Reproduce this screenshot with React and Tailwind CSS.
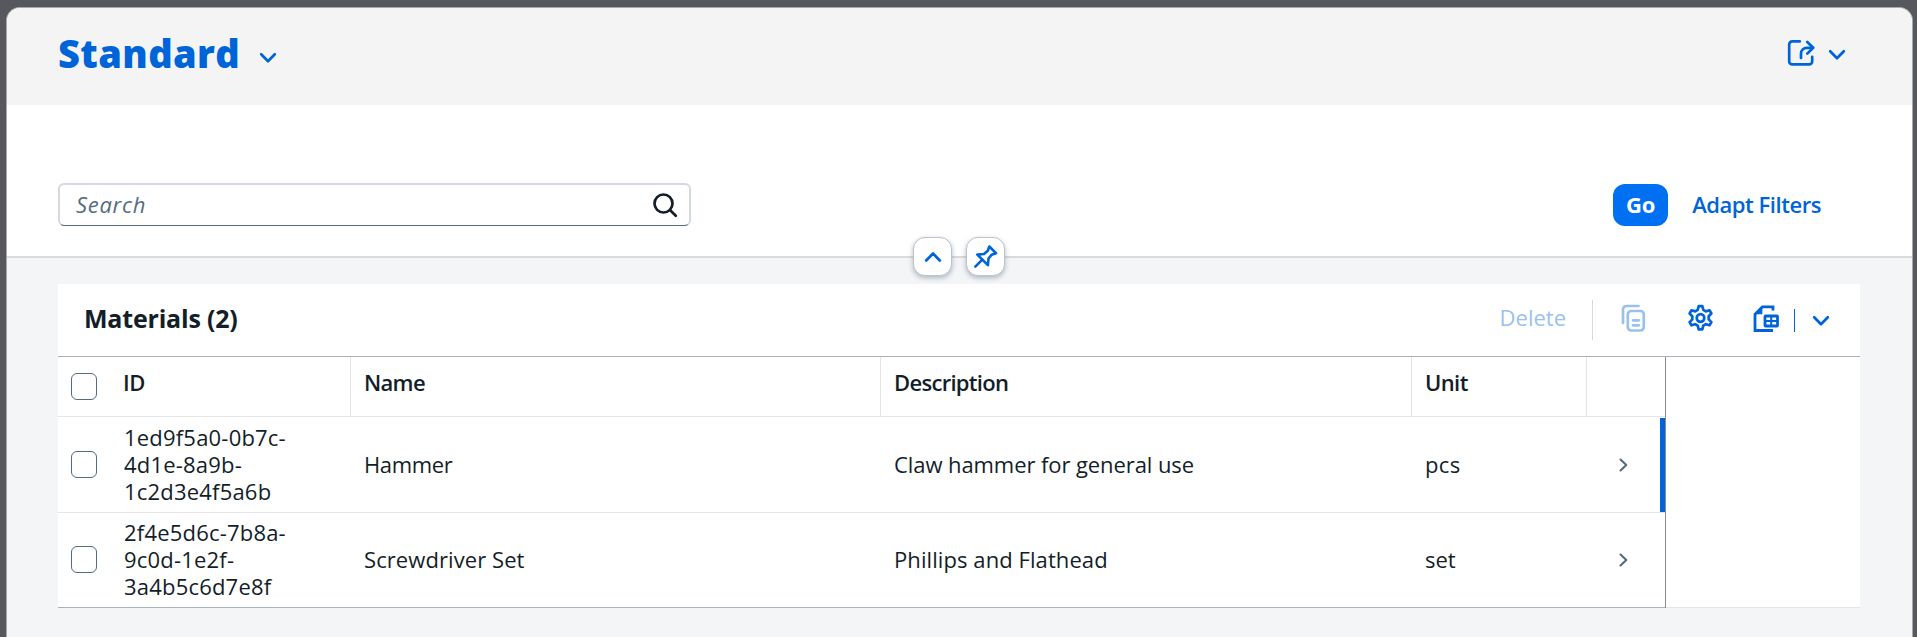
const rows = [
  {
    id: ["1ed9f5a0-0b7c-", "4d1e-8a9b-", "1c2d3e4f5a6b"],
    name: <span className="tracking-[-0.35px]">Hammer</span>,
    description: <span className="tracking-[-0.08px]">Claw hammer for general use</span>,
    unit: <span className="tracking-[0.4px]">pcs</span>,
    current: true,
  },
  {
    id: ["2f4e5d6c-7b8a-", "9c0d-1e2f-", "3a4b5c6d7e8f"],
    name: <span className="tracking-[0.08px]">Screwdriver Set</span>,
    description: <span className="tracking-[0.08px]">Phillips and Flathead</span>,
    unit: <span>set</span>,
    current: false,
  },
];

const GRID = "grid grid-cols-[293px_530px_531px_175px_78px]";

function Icon({ w, h, sw = 2.7, className = "", children }) {
  return (
    <svg
      width={w}
      height={h}
      viewBox={`0 0 ${w} ${h}`}
      fill="none"
      stroke="currentColor"
      strokeWidth={sw}
      strokeLinecap="round"
      strokeLinejoin="round"
      className={`shrink-0 ${className}`}
    >
      {children}
    </svg>
  );
}

const Chevron = ({ className }) => (
  <Icon w={18} h={12} className={className}>
    <path d="M2.2 2.2 9 9.2l6.8-7" />
  </Icon>
);

function Checkbox() {
  return <span className="block h-[27px] w-[26px] rounded-[6px] border border-[#556b82] bg-white" />;
}

function Header() {
  return (
    <header className="flex h-[97px] items-start bg-[#f4f4f4] pl-[51px] pr-[66px] text-[#0064d9]">
      <h1 className="mt-[19px] text-[38px] leading-[52px] font-extrabold tracking-[0.4px]">Standard</h1>
      <Chevron className="mt-[44px] ml-[19px]" />
      <div className="ml-auto flex">
        <Icon w={28} h={27} className="mt-[31px] mr-[13px]">
          <path d="M12.8 2.4H5.2a3 3 0 0 0-3 3v17a3 3 0 0 0 3 3h17a3 3 0 0 0 3-3v-4.6" />
          <path d="M14 19v-4.200C14 11 16.500 8.800 20 8.800h5.800" />
          <path d="M20.300 3 26.200 8.800l-5.900 5.800" />
        </Icon>
        <Chevron className="mt-[41px]" />
      </div>
    </header>
  );
}

function FilterBar() {
  return (
    <section className="relative flex h-[153px] items-start border-b-2 border-[#d9dadc] bg-white pt-[78px] pr-[91px] pl-[51px]">
      <div className="flex h-[43px] w-[633px] items-center justify-between rounded-[6px] border-2 border-b border-[#d5dae0] border-b-[#556b82] pr-[11px] pl-[16px]">
        <span className="-mt-[3px] text-[22px] leading-[30px] tracking-[0.7px] text-[#556b82] italic">Search</span>
        <Icon w={26} h={26} sw={2.7} className="-mt-px text-[#131e29]">
          <circle cx="11.500" cy="11.500" r="9" />
          <path d="m18.200 18.200 5.600 5.600" />
        </Icon>
      </div>
      <button className="mt-px ml-auto h-[42px] w-[55px] rounded-[12px] bg-[#0070f2] pb-[3px] text-[22px] leading-[30px] font-bold text-white">
        Go
      </button>
      <button className="ml-[24px] h-[42px] text-[22px] leading-[30px] font-semibold tracking-[-0.45px] text-[#0064d9]">
        Adapt Filters
      </button>
      <div className="absolute top-[132px] left-[906px] flex gap-[14px] text-[#0064d9]">
        <span className="flex size-[39px] items-center justify-center rounded-[12px] border border-[#bcc3ca] bg-white shadow-[0_2px_5px_rgba(85,107,130,0.45)]">
          <Icon w={18} h={12}>
            <path d="m2.200 9.500 6.800-7 6.800 7" />
          </Icon>
        </span>
        <span className="flex size-[39px] items-center justify-center rounded-[12px] border border-[#bcc3ca] bg-white shadow-[0_2px_5px_rgba(85,107,130,0.45)]">
          <Icon w={25} h={25} sw={2.6}>
            <path d="M16.300 2.500 23 9.200l-4.300 1.500-3.200 3.800-.6 6.700L4.300 10.600l6.700-.6 3.800-3.200z" />
            <path d="m9.300 15.700-7 7" />
          </Icon>
        </span>
      </div>
    </section>
  );
}

function Toolbar() {
  return (
    <div className="flex h-[72px] items-start pr-[30px] pl-[26px]">
      <h2 className="mt-[17px] text-[25px] leading-[34px] font-bold tracking-[-0.2px] text-[#131e29]">Materials (2)</h2>
      <div className="ml-auto flex text-[#0064d9]">
        <span className="mt-[18px] text-[22px] leading-[30px] font-medium text-[#99c1f0]">Delete</span>
        <span className="mt-[16px] ml-[26px] h-[40px] w-px bg-[#d9d9d9]" />
        <Icon w={25} h={28} sw={2.7} className="mt-[20px] ml-[28px] text-[#99c1f0]">
          <path d="M2 19V5.500a3.500 3.500 0 0 1 3.500-3.500h12" />
          <rect x="6.800" y="7" width="16" height="19.500" rx="3.500" />
          <path d="M12 16.300h5.800M12 21.300h5.800" />
        </Icon>
        <Icon w={27} h={28} className="mt-[20px] ml-[41px]">
          <path d="M11.700 2.200h3.600l1 3.700 2.500 1.500 3.700-1.100 1.900 3.200-2.700 2.700v3.200l2.700 2.700-1.900 3.200-3.700-1.100-2.500 1.500-1 3.700h-3.600l-1-3.700-2.500-1.500-3.700 1.100-1.900-3.200 2.700-2.700v-3.200L2.600 9.500l1.900-3.200 3.700 1.100 2.500-1.500z" />
          <circle cx="13.500" cy="14" r="3.800" />
        </Icon>
        <Icon w={26} h={28} sw={2.800} className="mt-[21px] ml-[39px]">
          <path d="M20 5.500V1.900H9.300L2 9.300v16.200h18" strokeLinecap="butt" strokeLinejoin="miter" />
          <path d="M2 9.300h7.300V2z" fill="currentColor" stroke="none" />
          <rect x="12" y="11" width="12.500" height="10" rx="0.600" />
          <path d="M18.200 11v10M12 16h12.500" strokeWidth="2" />
        </Icon>
        <span className="mt-[25px] ml-[15px] h-[23px] w-px bg-[#0064d9]" />
        <Chevron className="mt-[31px] ml-[17px]" />
      </div>
    </div>
  );
}

function TableHead() {
  return (
    <div className={`${GRID} h-[60px] border-b border-[#e5e5e5] text-[22px] leading-[30px] font-semibold text-[#131e29]`}>
      <div className="flex border-r border-[#e5e5e5] pl-[13px]">
        <span className="mt-[16px]">
          <Checkbox />
        </span>
        <span className="mt-[10px] ml-[26px] tracking-[-0.5px]">ID</span>
      </div>
      <div className="border-r border-[#e5e5e5] pt-[10px] pl-[13px] tracking-[-0.7px]">Name</div>
      <div className="border-r border-[#e5e5e5] pt-[10px] pl-[13px] tracking-[-0.7px]">Description</div>
      <div className="border-r border-[#e5e5e5] pt-[10px] pl-[13px] tracking-[-0.6px]">Unit</div>
      <div />
    </div>
  );
}

function TableRow({ row, last }) {
  return (
    <div
      className={`${GRID} items-center border-b text-[22px] leading-[27px] text-[#131e29] ${
        last ? "h-[95px] border-[#a8b2bd] pb-px" : "h-[96px] border-[#e5e5e5]"
      }`}
    >
      <div className="flex items-center pl-[13px]">
        <Checkbox />
        <span className="ml-[27px] tracking-[0.2px]">
          {row.id.map((part) => (
            <span key={part} className="block">
              {part}
            </span>
          ))}
        </span>
      </div>
      <div className="pl-[13px]">{row.name}</div>
      <div className="pl-[13px]">{row.description}</div>
      <div className="pl-[13px]">{row.unit}</div>
      <div className="flex h-full items-center justify-between pl-[31px]">
        <Icon w={11} h={16} sw={2.1} className="text-[#556b82]">
          <path d="m2.500 2.500 5.800 5.500-5.800 5.500" />
        </Icon>
        {row.current && <span className="mt-px h-[94px] w-[5px] bg-[#0064d9]" />}
      </div>
    </div>
  );
}

export default function App() {
  return (
    <div className="h-[637px] w-[1917px] overflow-hidden bg-[#57585d] pt-[7px] pl-[6px] font-['Open_Sans','Noto_Sans',sans-serif]">
      <main className="h-[630px] w-[1907px] overflow-hidden rounded-t-[14px] border border-b-0 border-[#a9a9ab] bg-[#f4f5f7]">
        <Header />
        <FilterBar />
        <section className="mt-[26px] ml-[51px] w-[1802px] bg-white">
          <Toolbar />
          <div className="flex border-t border-[#a8b2bd]">
            <div className="w-[1608px] border-r border-[#8c8c8c]">
              <TableHead />
              {rows.map((row, i) => (
                <TableRow key={row.id[0]} row={row} last={i === rows.length - 1} />
              ))}
            </div>
            <div className="grow border-b border-[#e5e5e5]" />
          </div>
        </section>
      </main>
    </div>
  );
}
